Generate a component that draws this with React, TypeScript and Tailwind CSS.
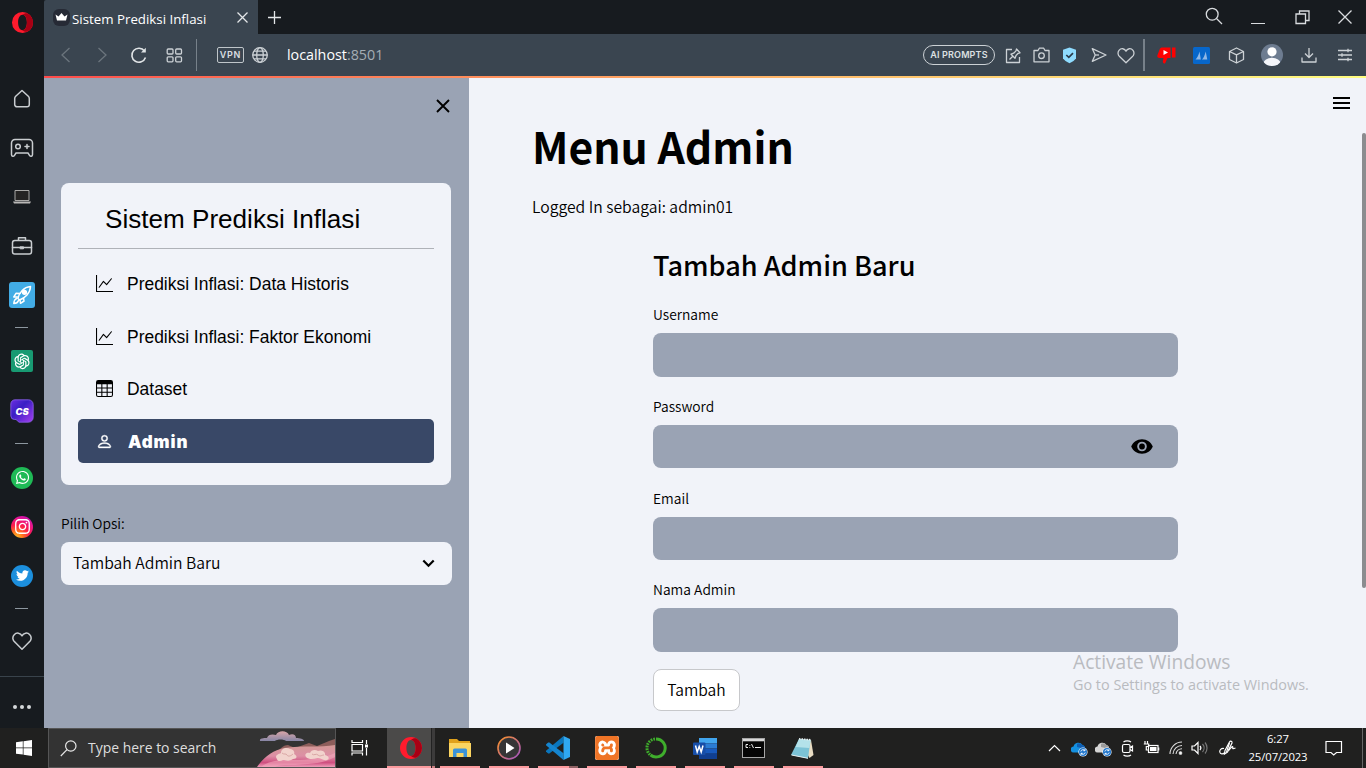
import React from "react";
import type { ReactNode } from "react";
import { BsGraphUp, BsTable, BsPerson } from "react-icons/bs";
import { AiOutlineOpenAI } from "react-icons/ai";
import { SiXampp } from "react-icons/si";
import { FaWhatsapp, FaTwitter, FaInstagram } from "react-icons/fa";

const CJK = "font-['Noto_Sans_CJK_SC','Open_Sans',sans-serif]";
const ARIAL = "font-['Liberation_Sans',Arial,sans-serif]";

function OperaMark({ size }: { size: number }) {
  return (
    <svg width={size} height={size} viewBox="0 0 24 24">
      <path fill="#ff1b2d" fillRule="evenodd" d="M12 1a11 11 0 1 0 0 22 11 11 0 0 0 0-22Zm0 3c2.7 0 4.6 3.4 4.6 8s-1.900 8-4.600 8-4.600-3.400-4.600-8 1.900-8 4.600-8Z" />
      <path fill="#a70014" d="M12 4c1.800-1.700 3.600-2 5.500-1.500A11 11 0 0 1 17.500 21.500c-1.900.5-3.700.2-5.500-1.500 2.700 0 4.600-3.400 4.600-8S14.700 4 12 4Z" />
    </svg>
  );
}

function Slot({ h, children }: { h: string; children: ReactNode }) {
  return <div className={`flex w-11 shrink-0 items-center justify-center ${h}`}>{children}</div>;
}

function Dash({ h }: { h: string }) {
  return (
    <Slot h={h}>
      <div className="mr-px h-px w-[13px] bg-[#8d979f]" />
    </Slot>
  );
}

function BrowserSidebar() {
  const line = { fill: "none", stroke: "#c9cdd0", strokeWidth: 1.5, strokeLinejoin: "round" as const, strokeLinecap: "round" as const };
  return (
    <aside className="flex w-11 shrink-0 flex-col bg-[#171b1f]">
      <Slot h="h-[44px]"><OperaMark size={23} /></Slot>
      <div className="h-[30px]" />
      <Slot h="h-[49px]">
        <svg width="20" height="20" viewBox="0 0 20 20" {...line}><path d="M10 1.500 16.300 7.300a3 3 0 0 1 1 2.200v6a2.300 2.300 0 0 1-2.300 2.300H5a2.300 2.300 0 0 1-2.300-2.300v-6a3 3 0 0 1 1-2.200Z" /></svg>
      </Slot>
      <Slot h="h-[49px]">
        <svg width="24" height="20" viewBox="0 0 24 20" {...line}>
          <path d="M5 1.500h14a3.500 3.500 0 0 1 3.500 3.500v11.500c0 2-2 2.300-3 .8L18 15H6l-1.500 2.300c-1 1.500-3 1.200-3-.8V5A3.500 3.500 0 0 1 5 1.500Z" />
          <circle cx="8" cy="8.500" r="2.300" /><path d="M17 6.500v4M15 8.500h4" />
        </svg>
      </Slot>
      <Slot h="h-[49px]">
        <svg width="20" height="16" viewBox="0 0 20 16"><path d="M3 1.500h14v10H3z" fill="#252423" stroke="#aaa9a7" /><path d="M1 12.500h18l-1 2H2Z" fill="#b9b8b6" /></svg>
      </Slot>
      <Slot h="h-[49px]">
        <svg width="22" height="20" viewBox="0 0 22 20" {...line}>
          <rect x="1.500" y="4.500" width="19" height="13.500" rx="2.300" /><path d="M7.500 4.300V1.800h7v2.500M1.500 11.500h8M12.500 11.500h8" /><rect x="9.500" y="10.800" width="3" height="2" fill="#c9cdd0" strokeWidth="1" />
        </svg>
      </Slot>
      <Slot h="h-[49px]">
        <div className="flex h-[26px] w-[26px] items-center justify-center rounded-[3px] bg-[#42ace5]">
          <svg width="20" height="20" viewBox="0 0 20 20" fill="none" stroke="#fff" strokeWidth="1.500" strokeLinejoin="round" strokeLinecap="round">
            <path d="M6 13.500C7 7.500 12 2 18.500 1.500 18.300 8 13 13 7.500 15Z" /><circle cx="12.500" cy="7.300" r="1.900" fill="#fff" />
            <path d="M8 8.500 4 8.300 1.800 12 5.500 12M11.500 13 12 16 8.500 18.300 8 15M5 13.500C2.500 14 2 16 1.800 18.500c2 0 4-.7 4.700-3" />
          </svg>
        </div>
      </Slot>
      <Dash h="h-[16px]" />
      <Slot h="h-[52px]">
        <div className="flex h-[22px] w-[22px] items-center justify-center rounded-[2px] bg-[#189a72] text-white"><AiOutlineOpenAI size={20} /></div>
      </Slot>
      <Slot h="h-[47px]">
        <svg width="24" height="24" viewBox="0 0 24 24">
          <defs>
            <linearGradient id="cs" x1="0" y1="0" x2="1" y2="1"><stop offset="0" stopColor="#6b2de0" /><stop offset=".4" stopColor="#3a1fc4" /><stop offset="1" stopColor="#a63df0" /></linearGradient>
          </defs>
          <path d="M5 .8h13.500a4.700 4.700 0 0 1 4.700 4.700v13a4.700 4.700 0 0 1-4.700 4.700H9L6 20.500H4.500A3.700 3.700 0 0 1 .8 17V5A4.200 4.200 0 0 1 5 .8Z" fill="url(#cs)" stroke="#8a63e8" strokeWidth=".8" />
          <text x="12" y="15.500" fill="#fff" fontSize="9.300" fontWeight="900" fontStyle="italic" textAnchor="middle" fontFamily="Inter, sans-serif">CS</text>
        </svg>
      </Slot>
      <Dash h="h-[19px]" />
      <Slot h="h-[49px]">
        <div className="flex h-[22px] w-[22px] items-center justify-center rounded-full bg-[#1fba56] text-white"><FaWhatsapp size={15} /></div>
      </Slot>
      <Slot h="h-[49px]">
        <div className="flex h-[22px] w-[22px] items-center justify-center rounded-full bg-[radial-gradient(circle_at_25%_100%,#ffc52e_0%,#ff7a1c_22%,#fb1c4c_48%,#e9168a_70%,#a40fd0_100%)] text-white"><FaInstagram size={17} /></div>
      </Slot>
      <Slot h="h-[49px]">
        <div className="flex h-[22px] w-[22px] items-center justify-center rounded-full bg-[#1c8fdd] text-white"><FaTwitter size={13} /></div>
      </Slot>
      <Dash h="h-[16px]" />
      <Slot h="h-[49px]">
        <svg width="20" height="20" viewBox="0 0 20 20" {...line}><path d="M10 18.200 3.300 11.500A5 5 0 0 1 2.200 3.800C4.500 1.200 8.500 1.700 10 4.800c1.500-3.100 5.500-3.600 7.800-1a5 5 0 0 1-1.100 7.700Z" /></svg>
      </Slot>
      <div className="h-[11px]" />
      <div className="h-px bg-[#39434b]" />
      <div className="flex flex-1 items-center justify-center gap-[3px] pt-2">
        <i className="h-[4px] w-[4px] rounded-full bg-[#d5d8da]" />
        <i className="h-[4px] w-[4px] rounded-full bg-[#d5d8da]" />
        <i className="h-[4px] w-[4px] rounded-full bg-[#d5d8da]" />
      </div>
    </aside>
  );
}

function TabStrip() {
  return (
    <div className="flex h-[34px] bg-[#171b1f] text-white">
      <div className="flex w-[214px] items-center rounded-tl-[2px] bg-[#3a4550] pl-[9px]">
        <svg width="17" height="17" viewBox="0 0 17 17">
          <rect width="17" height="17" rx="6" fill="#262a35" /><path d="M2.500 5.500 5.500 7.500 8.500 4l3 3.500 3-2-1.500 6H4Z" fill="#fff" />
        </svg>
        <span className="ml-[2px] w-[140px] pt-[5px] text-[13.3px] whitespace-nowrap">Sistem Prediksi Inflasi</span>
        <svg className="ml-[24px]" width="13" height="13" viewBox="0 0 13 13" stroke="#e4e7e9" strokeWidth="1.300"><path d="m1.500 1.500 10 10m0-10-10 10" /></svg>
      </div>
      <svg className="mt-[11px] ml-[10px]" width="13" height="13" viewBox="0 0 13 13" stroke="#e4e7e9" strokeWidth="1.300"><path d="M6.500 0v13M0 6.500h13" /></svg>
      <div className="ml-auto flex items-start">
        <svg className="mt-[7px] mr-[28px]" width="18" height="18" viewBox="0 0 18 18" fill="none" stroke="#d9dcdf" strokeWidth="1.300"><circle cx="7.200" cy="7.200" r="5.900" /><path d="m11.500 11.500 5.500 5.500" /></svg>
        <div className="mt-[23px] mr-[30px] h-px w-[14px] bg-[#d9dcdf]" />
        <svg className="mt-[10px] mr-[28px]" width="15" height="15" viewBox="0 0 15 15" fill="none" stroke="#d9dcdf" strokeWidth="1.300"><path d="M1 4h9.500v9.500H1zM4.500 4V1H14v9.500h-3.500" /></svg>
        <svg className="mt-[10px] mr-[14px]" width="14" height="14" viewBox="0 0 14 14" stroke="#d9dcdf" strokeWidth="1.300"><path d="m.5.5 13 13m0-13-13 13" /></svg>
      </div>
    </div>
  );
}

function AddressBar() {
  const st = { fill: "none", stroke: "#ccd1d5", strokeWidth: 1.3, strokeLinejoin: "round" as const };
  return (
    <div className="flex h-[42px] items-center bg-[#3a4550]">
      <svg className="ml-[16px]" width="12" height="16" viewBox="0 0 12 16" fill="none" stroke="#6b757d" strokeWidth="1.300"><path d="M9.500 1 2 8l7.500 7" /></svg>
      <svg className="ml-[24px]" width="12" height="16" viewBox="0 0 12 16" fill="none" stroke="#6b757d" strokeWidth="1.300"><path d="m2.500 1 7.500 7-7.500 7" /></svg>
      <svg className="ml-[22px]" width="18" height="18" viewBox="0 0 18 18" fill="none" stroke="#e0e4e6" strokeWidth="1.600"><path d="M14.500 5A7 7 0 1 0 15.500 11.500" /><path d="M11 6.500h4.800V1.800Z" fill="#e0e4e6" stroke="none" /></svg>
      <svg className="ml-[18px]" width="17" height="15" viewBox="0 0 17 15" {...st}><rect x="1.200" y="1" width="5.800" height="5" rx="1" /><rect x="9.700" y="1" width="5.800" height="5" rx="1" /><rect x="1.200" y="8.800" width="5.800" height="5" rx="1" /><rect x="9.700" y="8.800" width="5.800" height="5" rx="1" /></svg>
      <div className="ml-[13px] h-8 w-px bg-[#77818a]" />
      <div className="ml-[20px] flex h-[16px] w-[27px] items-center justify-center rounded-[2px] border border-[#bfc5c9] font-['Inter',sans-serif] text-[9px] font-semibold tracking-[0.7px] text-[#dbdfe1]">VPN</div>
      <svg className="ml-[7px]" width="18" height="18" viewBox="0 0 18 18" {...st}><circle cx="9" cy="9" r="7.300" /><ellipse cx="9" cy="9" rx="3.300" ry="7.300" /><path d="M1.700 9h14.600M3 5.200h12M3 12.800h12" /></svg>
      <span className="ml-[18px] text-[14.3px] text-white">localhost<span className="text-[#a5adb4]">:8501</span></span>
      <div className="ml-auto flex items-center">
        <div className="flex h-5 w-[72px] items-center justify-center rounded-full border border-[#ccd1d5] font-['Inter',sans-serif] text-[9px] font-semibold tracking-[0.15px] whitespace-nowrap text-[#dde0e2]">AI PROMPTS</div>
        <svg className="ml-[10px]" width="17" height="17" viewBox="0 0 17 17" {...st}><path d="M7 2.500H1.500v13h13V10" /><path d="m4.500 12.500 3.300-3.300M6 7.200l4 4 1-2.700 2.200-2.200 1.800-.5L11.500 2l-.5 1.900L8.700 6.200Z" /></svg>
        <svg className="ml-[11px]" width="17" height="16" viewBox="0 0 17 16" {...st}><path d="M1 3.500h4L6.300 1.200h4.400L12 3.500h4v11.300H1Z" /><circle cx="8.500" cy="8.700" r="2.800" /></svg>
        <svg className="ml-[12px]" width="15" height="17" viewBox="0 0 15 17"><path d="M7.500.5 14 2.800v8.700L11.500 14l-4 2.300-4-2.300L1 11.500V2.800Z" fill="#8fdcff" /><path d="m4.300 8 2.500 2.400L11 6.200" fill="none" stroke="#2b3c4c" strokeWidth="1.700" /></svg>
        <svg className="ml-[14px]" width="16" height="16" viewBox="0 0 16 16" {...st}><path d="M1.300 1.700 15 8 1.300 14.300 4.200 8Z" /><path d="M4.200 8H8" /></svg>
        <svg className="ml-[10px]" width="18" height="17" viewBox="0 0 18 17" {...st}><path d="M9 15.700 2.800 9.800A4.500 4.500 0 0 1 2 3.400C4 .8 7.800 1.300 9 4.200c1.200-2.900 5-3.400 7-.8a4.500 4.500 0 0 1-.8 6.400Z" /></svg>
        <div className="ml-[8px] h-8 w-[2px] bg-[#77818a]" />
        <svg className="ml-[12px]" width="19" height="17" viewBox="0 0 19 17"><path d="M4.500.5h9v10.500h-3L8 16.500c-2 0-2.500-1-2-3l.5-2.500H2.500C.8 11-.2 9.700.5 8L3 1.500Z" fill="#fe0000" /><path d="M15 .5h3.500v10H15Z" fill="#fe0000" /><path d="m6.500 3 4.500 2.500L6.500 8Z" fill="#fff" /></svg>
        <svg className="ml-[17px]" width="17" height="17" viewBox="0 0 17 17"><rect width="17" height="17" rx="1.500" fill="#0767cb" /><path d="M2.500 12.500C4 11 5.500 8.500 6.500 4.500l1.300 8ZM9 12.500c1.500-1.500 2.700-4 3.700-8l1.600 8Z" fill="#8fb7e6" /></svg>
        <svg className="ml-[18px]" width="17" height="17" viewBox="0 0 17 17" {...st}><path d="m8.500 1 7 3.500v8l-7 3.500-7-3.500v-8ZM1.500 4.500l7 3.300 7-3.300M8.500 7.800V16" /></svg>
        <svg className="ml-[16px]" width="22" height="22" viewBox="0 0 22 22"><defs><clipPath id="av"><circle cx="11" cy="11" r="11" /></clipPath></defs><g clipPath="url(#av)"><rect width="22" height="22" fill="#6d7c90" /><circle cx="11" cy="7.800" r="4.600" fill="#fff" /><ellipse cx="11" cy="19.500" rx="8.500" ry="5.800" fill="#f4f5f9" /></g></svg>
        <svg className="ml-[18px]" width="16" height="16" viewBox="0 0 16 16" {...st}><path d="M8 1v9M4 6.500l4 4 4-4M1 10.500V15h14v-4.500" /></svg>
        <svg className="mr-[14px] ml-[21px]" width="14" height="14" viewBox="0 0 14 14" {...st}><path d="M0 2.500h14M0 7h14M0 11.500h14M10 .7v3.600M4 5.200v3.600M10 9.700v3.600" /></svg>
      </div>
    </div>
  );
}

function MenuItem({ icon, label, top }: { icon: ReactNode; label: string; top: string }) {
  return (
    <li className={`flex h-11 items-center pl-[18px] ${top}`}>
      <span className="flex w-[17px] justify-center pb-[2px]">{icon}</span>
      <span className="ml-[14px] text-[17.45px] whitespace-nowrap">{label}</span>
    </li>
  );
}

function AppSidebar() {
  return (
    <section className="flex w-[425px] shrink-0 flex-col bg-[#9aa3b4] pl-[17px] text-black">
      <div className="flex h-[105px] justify-end pt-[21px] pr-[19px]">
        <svg width="14" height="14" viewBox="0 0 14 14" stroke="#000" strokeWidth="1.900"><path d="m1 1 12 12m0-12L1 13" /></svg>
      </div>
      <nav className={`h-[302px] w-[390px] rounded-lg bg-[#f1f3f9] px-[17px] ${ARIAL}`}>
        <h3 className="h-[65px] pt-[17px] pl-[27px] text-[26.1px] leading-[38px] whitespace-nowrap">Sistem Prediksi Inflasi</h3>
        <div className="h-px bg-[#afb2b8]" />
        <ul>
          <MenuItem icon={<BsGraphUp size={17} />} label="Prediksi Inflasi: Data Historis" top="mt-[13px]" />
          <MenuItem icon={<BsGraphUp size={17} />} label="Prediksi Inflasi: Faktor Ekonomi" top="mt-[9px]" />
          <MenuItem icon={<BsTable size={17} />} label="Dataset" top="mt-[8px]" />
          <li className="mt-[8px] flex h-11 items-center rounded-[5px] bg-[#394867] pl-[18px] text-white">
            <BsPerson size={17} strokeWidth={0.4} />
            <span className="ml-[15px] pt-[3px] font-['Inter',sans-serif] text-[17px] font-black tracking-[0.9px]">Admin</span>
          </li>
        </ul>
      </nav>
      <div className={`font-[350] ${CJK}`}>
        <label className="mt-[28px] block h-[29px] text-[13.8px] leading-5">Pilih Opsi:</label>
        <div className="flex h-[43px] w-[391px] items-center justify-between rounded-lg bg-[#f1f3f9] pr-[17px] pl-[12px] text-[15.7px]">
          <span className="pb-[2px] leading-6">Tambah Admin Baru</span>
          <svg width="13" height="9" viewBox="0 0 13 9" fill="none" stroke="#000" strokeWidth="2.200"><path d="m1.300 1.500 5.200 5.200 5.200-5.200" /></svg>
        </div>
      </div>
    </section>
  );
}

function Field({ label, children }: { label: string; children?: ReactNode }) {
  return (
    <div className="h-[91.8px]">
      <label className="block h-[29px] text-[13.8px] leading-5">{label}</label>
      <div className="flex h-[43.5px] items-center justify-end rounded-lg bg-[#9aa3b4] pr-[25px]">{children}</div>
    </div>
  );
}

function Main() {
  return (
    <main className={`relative flex-1 bg-[#f1f3f9] font-[350] text-black ${CJK}`}>
      <div className="pl-[63px]">
        <h1 className="pt-[37px] text-[42.7px] leading-[60px] font-bold">Menu Admin</h1>
        <p className="pt-[20px] text-[15.7px] leading-6">Logged In sebagai: admin01</p>
      </div>
      <form className="ml-[184px] w-[525px] pt-[26px]">
        <h2 className="text-[27.1px] leading-[40px] font-medium">Tambah Admin Baru</h2>
        <div className="pt-[19px]">
          <Field label="Username" />
          <Field label="Password">
            <svg width="22" height="15" viewBox="0 0 22 15"><path fillRule="evenodd" d="M11 .3C6 .3 2 3.200.2 7.500 2 11.800 6 14.700 11 14.700s9-2.900 10.800-7.200C20 3.200 16 .3 11 .3Zm0 12a4.800 4.800 0 1 1 0-9.600 4.800 4.800 0 0 1 0 9.600Zm0-1.900a2.900 2.900 0 1 0 0-5.800 2.900 2.900 0 0 0 0 5.800Z" /></svg>
          </Field>
          <Field label="Email" />
          <Field label="Nama Admin" />
        </div>
        <button type="button" className="-mt-[2px] flex h-[42px] w-[87px] items-center justify-center rounded-lg border border-[#c7c8cb] bg-white pb-[2px] text-[15.6px] leading-6">Tambah</button>
      </form>
      <svg className="absolute top-[19px] right-[16px]" width="17" height="12" viewBox="0 0 17 12"><path d="M0 0h17v2H0zM0 5h17v2H0zM0 10h17v2H0z" /></svg>
      <div className="absolute top-[55px] right-0 h-[455px] w-[4px] rounded-[2px] bg-[#8b8c8f]" />
      <div className="absolute top-[572px] left-[604px] font-['Open_Sans',sans-serif] font-normal whitespace-nowrap text-[#b9bbc0]">
        <div className="text-[19.2px] leading-6">Activate Windows</div>
        <div className="text-[14.4px] leading-[22px]">Go to Settings to activate Windows.</div>
      </div>
    </main>
  );
}

function TaskIcon({ children, split }: { children: ReactNode; split?: boolean }) {
  return (
    <div className="flex w-[49px] flex-col items-center">
      <div className="flex h-[38px] items-center pt-[2px]">{children}</div>
      <div className="flex h-[2px] w-10 bg-[#fb9a9d]">{split && <div className="ml-auto w-[9px] bg-[#8f6264]" />}</div>
    </div>
  );
}

function Cloud({ front, back }: { front: string; back: string }) {
  return (
    <svg width="17" height="15" viewBox="0 0 17 15">
      <path d="M3 10.500a3 3 0 0 1-.5-6A5 5 0 0 1 11.500 3a3.500 3.500 0 0 1 2.500 4v3.500Z" fill={front} /><path d="M6 1.800a5 5 0 0 1 5.500 1.200 3.500 3.500 0 0 1 2.500 4L6 5Z" fill={back} />
      <circle cx="12" cy="10" r="4.600" fill="#fff" /><circle cx="12" cy="10" r="4" fill="#1d74cb" />
      <path d="M9.800 9.500a2.300 2.300 0 0 1 4-1M14.200 10.500a2.300 2.300 0 0 1-4 1M14 7v1.700h-1.700M10 13v-1.700h1.700" fill="none" stroke="#fff" strokeWidth=".9" />
    </svg>
  );
}

function Taskbar() {
  const w = { fill: "none", stroke: "#fff", strokeWidth: 1.2 };
  return (
    <footer className="flex h-10 shrink-0 bg-[#20201f] text-white">
      <div className="flex w-12 items-center justify-center">
        <svg width="16" height="16" viewBox="0 0 16 16" fill="#fff"><path d="M0 2.300 6.800 1.300v6.200H0ZM7.500 1.200 16 0v7.500H7.500ZM0 8.300h6.800v6.300L0 13.700ZM7.500 8.300H16V16l-8.500-1.200Z" /></svg>
      </div>
      <div className="flex w-[288px] items-center border border-[#555] bg-[#333] pl-[11px]">
        <svg width="17" height="17" viewBox="0 0 17 17" fill="none" stroke="#e8e8e8" strokeWidth="1.200"><circle cx="10.800" cy="6" r="5.200" /><path d="M7 9.700.8 16" /></svg>
        <span className="ml-[11px] w-[134px] pt-px text-[13.95px] whitespace-nowrap text-[#dedede]">Type here to search</span>
        <svg className="ml-auto" width="78" height="38" viewBox="0 0 78 38">
          <defs>
            <linearGradient id="sea" x1="0" y1="0" x2="0" y2="1"><stop offset="0" stopColor="#d39a96" /><stop offset=".5" stopColor="#dd8fa5" /><stop offset=".8" stopColor="#cf4f80" /><stop offset="1" stopColor="#ee9fba" /></linearGradient>
            <linearGradient id="cld" x1="0" y1="0" x2="0" y2="1"><stop offset="0" stopColor="#d9a5a8" /><stop offset="1" stopColor="#8786a6" /></linearGradient>
          </defs>
          <path d="M18 25c4-4 8-9 13-9l7 3 14-5 8 3 12-5 6-2v16H18Z" fill="#8d5e5b" />
          <path d="M0 38c6-9 16-17 27-19 20-3 36 0 51-3v22Z" fill="url(#sea)" />
          <path d="M4 38c10-8 22-7 34-7s28-1 40-7v4c-12 7-28 7-40 8-10 0-16 0-20 2Z" fill="#f3a9bd" opacity=".6" />
          <path d="M3 12c-1-3 4-3 7-3 1-4 6-4 9-3 2-5 11-5 13 0 4-2 7 0 7 3 4 0 8 1 8 3H29c-2-2-9-2-11 0Z" fill="url(#cld)" />
          <path d="M20 30c-3-4 2-5 4-6 0-5 6-6 9-4 4 0 5 4 4 5 4 2 3 5-1 5-4 3-8 1-10 1-3 2-6 1-6-1ZM49 28c-2-3 1-5 4-4 1-3 5-4 8-2 5-2 8 2 7 4 4 1 5 4 2 5-4 1-6-2-9-2-4 1-9 2-12-1Z" fill="#f2d3cd" />
          <path d="M25 24c2 2 4 0 5 2s4 1 6-1M55 25c2 2 4-1 6 1s4 0 6 0" fill="none" stroke="#d9a6a4" />
        </svg>
      </div>
      <div className="flex w-[51px] items-center pl-[15px]">
        <svg width="18" height="16" viewBox="0 0 18 16" {...w}><path d="M1 0v2.500h10.500V0M1 4.500h10.500v6.500H1zM1 15.500V13h10.500v2.500M15.500 0v4M15.500 8v7.500" /><path d="M14 4.500h3v3h-3Z" fill="#fff" stroke="none" /></svg>
      </div>
      <div className="flex w-[44px] flex-col items-center bg-[#4b4a49]">
        <div className="flex h-[38px] items-center pt-[2px] pl-[3px]"><OperaMark size={24} /></div>
        <div className="h-[2px] w-full bg-[#fb9a9d]" />
      </div>
      <div className="flex w-[4px] flex-col justify-end border-l border-[#222] bg-[#3c3b3b]"><div className="h-[2px] bg-[#c77e80]" /></div>
      <TaskIcon>
        <svg width="22" height="18" viewBox="0 0 22 18"><path d="M0 0h8l2 2h11v3H0Z" fill="#e0a11b" /><path d="M0 4h22v14H0Z" fill="#fbd561" /><path d="M4 18v-7a1.500 1.500 0 0 1 1.500-1.500h11A1.500 1.500 0 0 1 18 11v7h-3.500v-4h-7v4Z" fill="#3c93d8" /></svg>
      </TaskIcon>
      <TaskIcon>
        <svg width="24" height="24" viewBox="0 0 24 24"><defs><linearGradient id="mp" x1="0" y1="0" x2="1" y2="1"><stop offset=".15" stopColor="#f08a3c" /><stop offset="1" stopColor="#a052c8" /></linearGradient></defs><circle cx="12" cy="12" r="11" fill="#363536" stroke="url(#mp)" strokeWidth="1.600" /><path d="m9 6.500 8.500 5.500L9 17.500Z" fill="#fff" /></svg>
      </TaskIcon>
      <TaskIcon split>
        <svg width="24" height="24" viewBox="0 0 24 24"><path d="M17.500 0v6.800L3 17.800 1.500 17 0 15.500v-.8Z" fill="#0a76bd" /><path d="M17.500 24v-6.800L3 6.200 1.500 7 0 8.500v.8Z" fill="#1585cf" /><path d="M17.500 0 24 3v18l-6.500 3Z" fill="#2fa8f2" /></svg>
      </TaskIcon>
      <TaskIcon>
        <div className="flex h-6 w-6 items-center justify-center rounded-[2px] bg-white"><SiXampp size={24} color="#ef7426" /></div>
      </TaskIcon>
      <TaskIcon>
        <svg width="22" height="22" viewBox="0 0 22 22" fill="none" stroke="#3fae2c"><path d="M11 2a9 9 0 1 1-5.500 16" strokeWidth="3" /><path d="M10 2A9 9 0 0 0 5 17.700" strokeWidth="3" strokeDasharray="1.700 1" /></svg>
      </TaskIcon>
      <TaskIcon>
        <svg width="24" height="21" viewBox="0 0 24 21"><path d="M6 0h18v5.300H6z" fill="#41a5ee" /><path d="M6 5.300h18v5.200H6z" fill="#2b7cd3" /><path d="M6 10.500h18v5.200H6z" fill="#185abd" /><path d="M6 15.700h18V21H6z" fill="#103f91" /><rect y="4.500" width="12.500" height="12.500" rx="1" fill="#174ea8" /><path d="m2.500 7.500 1.700 6.500 2-5.500 2 5.500L10 7.500" fill="none" stroke="#fff" strokeWidth="1.500" /></svg>
      </TaskIcon>
      <TaskIcon>
        <svg width="23" height="20" viewBox="0 0 23 20"><rect x=".5" y=".5" width="22" height="19" fill="#050505" stroke="#a7a7a7" /><path d="M1 1h21v2.300H1Z" fill="#d9d9d9" /><path d="M6 6.500H4v3h2M7.800 7v.8M7.800 9v.8M9.500 6l2 4M13 9.500h6" stroke="#eee" fill="none" /></svg>
      </TaskIcon>
      <TaskIcon>
        <svg width="23" height="23" viewBox="0 0 23 23"><path d="m8 2 12 1 2.500 15-4 3Z" fill="#e8dcc3" /><path d="M8 2 19.500 3 17 21.500 0 18Z" fill="#7cc3d6" /><path d="M8 2 19.500 3l-1 8L4.500 10Z" fill="#b4e2ea" /><path d="m8 1.800 11.500 1" stroke="#e9eff0" strokeWidth="1.600" strokeDasharray="1.500 1" /><path d="m.5 18 16.500 3.300" stroke="#e9eff0" /></svg>
      </TaskIcon>
      <div className="ml-auto flex items-center">
        <svg width="13" height="8" viewBox="0 0 13 8" {...w}><path d="m1 7 5.500-5.500L12 7" /></svg>
        <div className="ml-[10px] pt-[3px]"><Cloud front="#1490df" back="#0f5fb3" /></div>
        <div className="ml-[7px] pt-[3px]"><Cloud front="#d4d4d4" back="#9b9b9b" /></div>
        <svg className="ml-[9px]" width="13" height="17" viewBox="0 0 13 17" {...w}><rect x="1.500" y="4.500" width="7.500" height="8" rx="1.500" /><path d="M9 7.500 11.500 6v5L9 9.500M2.500 2C4.500.5 8 .5 10 2M2.500 15c2 1.500 5.500 1.500 7.500 0" /></svg>
        <svg className="ml-[9px]" width="17" height="14" viewBox="0 0 17 14" {...w}><rect x="5.500" y="4.500" width="9.500" height="7" /><path d="M7 6h6.500v4H7Z" fill="#fff" stroke="none" /><path d="M15.700 6.500v3M2 0v3M4.500 0v3M.8 3h4.900v2.500H3.300v3.500h2" /></svg>
        <svg className="ml-[9px]" width="15" height="14" viewBox="0 0 15 14" fill="none" stroke="#ddd" strokeWidth="1.100"><path d="M1 13A12 12 0 0 1 13 1M4 13a9 9 0 0 1 9-8.500M7 13a6 6 0 0 1 6-5.200" /><circle cx="11.500" cy="12" r="1.300" fill="#fff" /></svg>
        <svg className="ml-[7px]" width="17" height="14" viewBox="0 0 17 14" {...w}><path d="M1 5h2.500L7 1.500v11L3.500 9H1Z" /><path d="M9 5a3 3 0 0 1 0 4" /><path d="M11.500 3a6 6 0 0 1 0 8M14 1.500a8.500 8.500 0 0 1 0 11" stroke="#777" /></svg>
        <svg className="ml-[11px]" width="17" height="17" viewBox="0 0 17 17" {...w}><path d="M5.500 14 6 10.500 10.500 2c1-1.500 3-.5 2.500 1L8.500 12Z" /><path d="M10.500 3 7.500 12M5 8.500c-3-.5-4.500 1.500-4.200 3.500C1.200 14.500 4 14.500 5.800 12.500M9.500 10.500c2.500-3 4-4.500 4.300-3.500.3 1-1.300 2.500 2.700 1" /></svg>
        <div className="ml-[9px] w-[66px] text-center text-[11.3px] leading-[18px] tracking-[-0.1px]">
          <div>6:27</div>
          <div>25/07/2023</div>
        </div>
        <svg className="ml-[14px]" width="18" height="17" viewBox="0 0 18 17" {...w}><path d="M1 1.500h15.500v11h-5L8.700 15 6 12.500H1Z" /></svg>
        <div className="ml-[19px] h-10 w-px bg-[#666]" />
        <div className="w-[3px]" />
      </div>
    </footer>
  );
}

export default function App() {
  return (
    <div className="flex h-[768px] w-[1366px] flex-col overflow-hidden font-['Open_Sans','Noto_Sans',sans-serif]">
      <div className="flex h-[728px]">
        <BrowserSidebar />
        <div className="flex flex-1 flex-col">
          <TabStrip />
          <AddressBar />
          <div className="h-[2px] bg-gradient-to-r from-[#ff4b4b] to-[#fffd80]" />
          <div className="flex flex-1">
            <AppSidebar />
            <Main />
          </div>
        </div>
      </div>
      <Taskbar />
    </div>
  );
}
